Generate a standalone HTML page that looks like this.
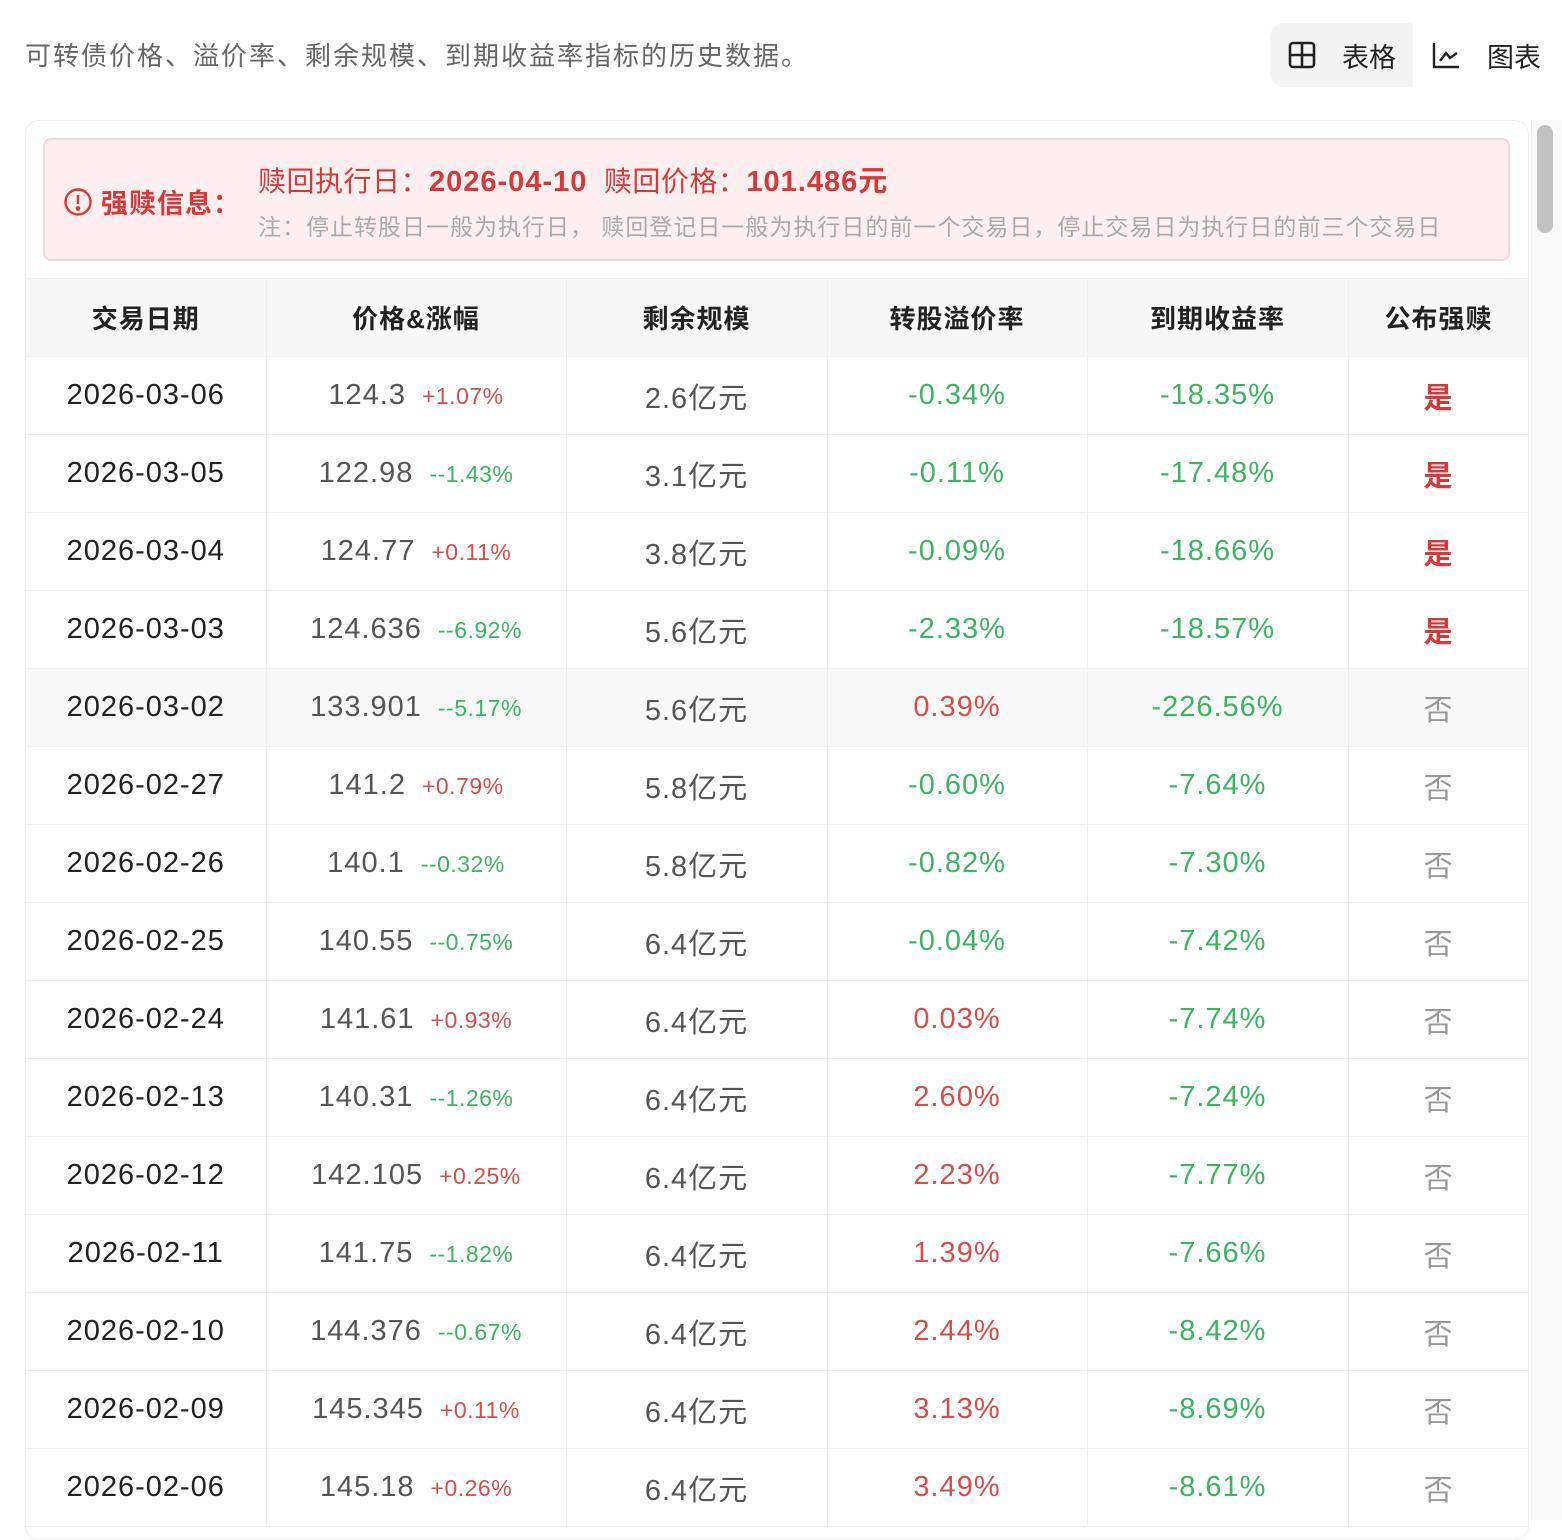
<!DOCTYPE html>
<html><head><meta charset="utf-8">
<style>
*{margin:0;padding:0;box-sizing:border-box}
html,body{width:1562px;height:1516px;overflow:hidden;background:#fff;font-family:"Liberation Sans","Noto Sans CJK SC",sans-serif;}
.sub{position:absolute;left:25px;top:36px;font-size:26px;color:#666;line-height:40px;letter-spacing:2px}
.tog{position:absolute;left:1270px;top:23px;height:64px;display:flex;align-items:center;font-size:27px;color:#222}
.tog .a{background:#f3f3f3;border-radius:14px 0 0 14px;height:64px;width:143px;display:flex;align-items:center;padding-left:18px}
.tog .b{display:flex;align-items:center;padding-left:18px}
.card{position:absolute;left:25px;top:120px;width:1504px;height:1420px;border:1px solid #eee;border-radius:14px;overflow:hidden}
.alert{position:absolute;left:17px;top:17px;width:1467px;height:123px;background:#fdeff0;border:2px solid #f7d4d6;border-radius:8px}
.al{position:absolute;left:18px;top:42px;color:#d53a3a;font-size:27px;font-weight:bold;display:flex;align-items:center;letter-spacing:1px}
.l1{position:absolute;left:213px;top:18px;font-size:28px;color:#d53a3a;white-space:nowrap;letter-spacing:0.5px}
.l1 b{font-weight:bold;font-size:29px;letter-spacing:1px}
.l2{position:absolute;left:213px;top:68px;font-size:23px;color:#aaa;white-space:nowrap;letter-spacing:1px}
table{position:absolute;left:0;top:157px;border-collapse:collapse;width:1503px;table-layout:fixed}
td,th{height:78px;text-align:center;border:1px solid #efefef;font-size:29px;letter-spacing:1px;color:#333;font-weight:normal}
th{background:#f7f7f7;font-weight:bold;color:#222;font-size:26px;letter-spacing:1px}
tr td:first-child,tr th:first-child{border-left:none}
td.d{color:#222}
td.p{color:#555}
.r{color:#d94c4c}.g{color:#3cb464}
td .s{font-size:23px;margin-left:16px;letter-spacing:0.5px}
.y{color:#d53a3a;font-weight:bold}
.n{color:#999}
tr.h td{background:#f8f8f8}
.sb{position:absolute;left:1531px;top:120px;width:31px;height:1400px;background:#f9f9f9;border-left:1px solid #eee}
.th{position:absolute;left:1537px;top:125px;width:16px;height:108px;background:#c2c2c2;border-radius:8px}
</style></head><body>
<div class="sub">可转债价格、溢价率、剩余规模、到期收益率指标的历史数据。</div>
<div class="tog">
<div class="a"><svg width="28" height="28" viewBox="0 0 28 28" fill="none" stroke="#222" stroke-width="2.6"><rect x="2" y="2" width="24" height="24" rx="3"/><line x1="14" y1="2" x2="14" y2="26"/><line x1="2" y1="14" x2="26" y2="14"/></svg><span style="margin-left:26px">表格</span></div>
<div class="b"><svg width="30" height="28" viewBox="0 0 30 28" fill="none" stroke="#222" stroke-width="2.4"><path d="M3 2V26H28"/><path d="M9 20L15 12L19 17L26 12"/></svg><span style="margin-left:26px">图表</span></div>
</div>
<div class="card">
<div class="alert">
<div class="al"><svg width="30" height="30" viewBox="0 0 30 30" fill="none" stroke="#d53a3a" stroke-width="2.4"><circle cx="15" cy="15" r="12.5"/><line x1="15" y1="8" x2="15" y2="17"/><circle cx="15" cy="21.5" r="1.2" fill="#d53a3a"/></svg><span style="margin-left:8px">强赎信息：</span></div>
<div class="l1">赎回执行日：<b>2026-04-10</b>&nbsp; 赎回价格：<b>101.486元</b></div>
<div class="l2">注：停止转股日一般为执行日， 赎回登记日一般为执行日的前一个交易日，停止交易日为执行日的前三个交易日</div>
</div>
<table>
<colgroup><col style="width:240px"><col style="width:300px"><col style="width:261px"><col style="width:260px"><col style="width:261px"><col style="width:181px"></colgroup>
<tr><th>交易日期</th><th>价格&amp;涨幅</th><th>剩余规模</th><th>转股溢价率</th><th>到期收益率</th><th>公布强赎</th></tr>
<tr><td class="d">2026-03-06</td><td class="p">124.3<span class="s r">+1.07%</span></td><td class="p">2.6亿元</td><td class="g">-0.34%</td><td class="g">-18.35%</td><td class="y">是</td></tr>
<tr><td class="d">2026-03-05</td><td class="p">122.98<span class="s g">--1.43%</span></td><td class="p">3.1亿元</td><td class="g">-0.11%</td><td class="g">-17.48%</td><td class="y">是</td></tr>
<tr><td class="d">2026-03-04</td><td class="p">124.77<span class="s r">+0.11%</span></td><td class="p">3.8亿元</td><td class="g">-0.09%</td><td class="g">-18.66%</td><td class="y">是</td></tr>
<tr><td class="d">2026-03-03</td><td class="p">124.636<span class="s g">--6.92%</span></td><td class="p">5.6亿元</td><td class="g">-2.33%</td><td class="g">-18.57%</td><td class="y">是</td></tr>
<tr class="h"><td class="d">2026-03-02</td><td class="p">133.901<span class="s g">--5.17%</span></td><td class="p">5.6亿元</td><td class="r">0.39%</td><td class="g">-226.56%</td><td class="n">否</td></tr>
<tr><td class="d">2026-02-27</td><td class="p">141.2<span class="s r">+0.79%</span></td><td class="p">5.8亿元</td><td class="g">-0.60%</td><td class="g">-7.64%</td><td class="n">否</td></tr>
<tr><td class="d">2026-02-26</td><td class="p">140.1<span class="s g">--0.32%</span></td><td class="p">5.8亿元</td><td class="g">-0.82%</td><td class="g">-7.30%</td><td class="n">否</td></tr>
<tr><td class="d">2026-02-25</td><td class="p">140.55<span class="s g">--0.75%</span></td><td class="p">6.4亿元</td><td class="g">-0.04%</td><td class="g">-7.42%</td><td class="n">否</td></tr>
<tr><td class="d">2026-02-24</td><td class="p">141.61<span class="s r">+0.93%</span></td><td class="p">6.4亿元</td><td class="r">0.03%</td><td class="g">-7.74%</td><td class="n">否</td></tr>
<tr><td class="d">2026-02-13</td><td class="p">140.31<span class="s g">--1.26%</span></td><td class="p">6.4亿元</td><td class="r">2.60%</td><td class="g">-7.24%</td><td class="n">否</td></tr>
<tr><td class="d">2026-02-12</td><td class="p">142.105<span class="s r">+0.25%</span></td><td class="p">6.4亿元</td><td class="r">2.23%</td><td class="g">-7.77%</td><td class="n">否</td></tr>
<tr><td class="d">2026-02-11</td><td class="p">141.75<span class="s g">--1.82%</span></td><td class="p">6.4亿元</td><td class="r">1.39%</td><td class="g">-7.66%</td><td class="n">否</td></tr>
<tr><td class="d">2026-02-10</td><td class="p">144.376<span class="s g">--0.67%</span></td><td class="p">6.4亿元</td><td class="r">2.44%</td><td class="g">-8.42%</td><td class="n">否</td></tr>
<tr><td class="d">2026-02-09</td><td class="p">145.345<span class="s r">+0.11%</span></td><td class="p">6.4亿元</td><td class="r">3.13%</td><td class="g">-8.69%</td><td class="n">否</td></tr>
<tr><td class="d">2026-02-06</td><td class="p">145.18<span class="s r">+0.26%</span></td><td class="p">6.4亿元</td><td class="r">3.49%</td><td class="g">-8.61%</td><td class="n">否</td></tr>
</table>
</div>
<div class="sb"></div><div class="th"></div>
</body></html>
